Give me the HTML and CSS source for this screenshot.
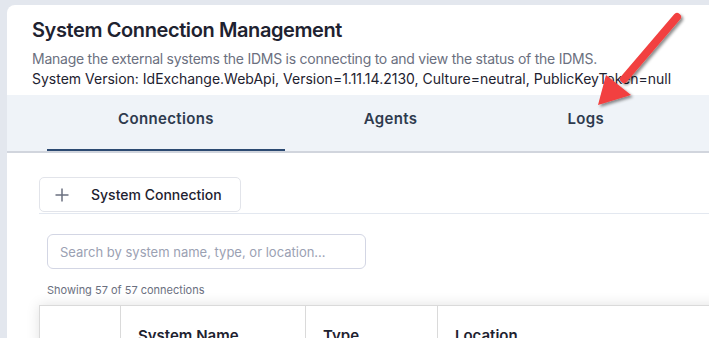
FILE: index.html
```html
<!DOCTYPE html>
<html lang="en">
<head>
    <meta charset="UTF-8">
    <meta name="viewport" content="width=device-width, initial-scale=1.0">
    <title>System Connection Management</title>
    <link rel="stylesheet" href="styles.css">
</head>
<body>
    <div class="card">
        <div class="header">
            <h1>System Connection Management</h1>
            <p class="subtitle">Manage the external systems the IDMS is connecting to and view the status of the IDMS.</p>
            <p class="version">System Version: IdExchange.WebApi, Version=1.11.14.2130, Culture=neutral, PublicKeyToken=null</p>
        </div>

        <!-- Tabs -->
        <div class="tabs">
            <div class="tab active">Connections</div>
            <div class="tab">Agents</div>
            <div class="tab">Logs</div>
        </div>

        <div class="content">
            <div class="toolbar">
                <button class="add-btn" type="button">
                    <svg class="plus" width="14" height="14" viewBox="0 0 14 14">
                        <path d="M7 0.5V13.5M0.5 7H13.5" stroke="#6b7080" stroke-width="1.5" fill="none"/>
                    </svg>
                    <span>System Connection</span>
                </button>
            </div>

            <input class="search" type="text" placeholder="Search by system name, type, or location...">
            <div class="count">Showing 57 of 57 connections</div>

            <table class="grid">
                <thead>
                    <tr>
                        <th class="col-sel"></th>
                        <th class="col-name">System Name</th>
                        <th class="col-type">Type</th>
                        <th class="col-loc">Location</th>
                    </tr>
                </thead>
            </table>
        </div>
    </div>

    <!-- annotation arrow -->
    <svg class="arrow" width="120" height="120" viewBox="0 0 120 120">
        <defs>
            <filter id="shadow" x="-20%" y="-20%" width="150%" height="150%">
                <feDropShadow dx="2" dy="2" stdDeviation="1.5" flood-color="#000" flood-opacity="0.45"/>
            </filter>
        </defs>
        <g filter="url(#shadow)">
            <line x1="97" y1="12" x2="44" y2="74" stroke="#f2403f" stroke-width="8" stroke-linecap="round"/>
            <polygon points="18,100 26,70 51,90" fill="#f2403f"/>
        </g>
    </svg>
</body>
</html>
```

FILE: styles.css
```css
body {
    margin: 0;
    background-color: #e3e7ee;
    font-family: Inter, "Noto Sans", sans-serif;
    color: #1e2230;
    overflow: hidden;
    height: 338px;
}

.card {
    margin: 5px 0 0 7px;
    background: #fff;
    border-radius: 8px 0 0 0;
    height: 400px;
}

.header {
    padding: 12px 25px 0 25px;
}

h1 {
    margin: 0 0 6px 0;
    font-size: 20px;
    font-weight: 600;
    line-height: 26px;
    letter-spacing: -0.4px;
    color: #1e2230;
}

.subtitle,
.version {
    margin: 0;
    font-size: 14px;
    line-height: 20px;
}

.subtitle {
    color: #6b7080;
    letter-spacing: -0.25px;
}

.version {
    color: #1e2230;
}

.tabs {
    display: flex;
    gap: 8px;
    margin-top: 6px;
    padding-left: 40px;
    height: 56px;
    background: #eff3f8;
    border-bottom: 2px solid #d1d5dd;
}

.tab {
    display: flex;
    align-items: center;
    padding: 0 71px 8px 71px;
    font-size: 15px;
    font-weight: 600;
    letter-spacing: 0.35px;
    color: #2e3a4e;
    border-bottom: 2px solid transparent;
}

.tab.active {
    border-bottom-color: #2c4a72;
}

.content {
    padding: 24px 0 0 32px;
}

.toolbar {
    display: flex;
    border-bottom: 1px solid #e3e8f0;
    padding-bottom: 1px;
}

.add-btn {
    display: flex;
    align-items: center;
    width: 202px;
    height: 35px;
    padding: 0 0 0 15px;
    background: #fff;
    border: 1px solid #e2e4ea;
    border-radius: 5px;
    font-family: inherit;
    font-size: 14px;
    font-weight: 500;
    color: #1e2230;
}

.plus {
    margin-right: 22px;
}

.search {
    display: block;
    margin: 20px 0 0 8px;
    width: 319px;
    height: 35px;
    box-sizing: border-box;
    padding: 0 12px;
    border: 1px solid #d3d6e4;
    border-radius: 6px;
    font-family: inherit;
    font-size: 13px;
    color: #1e2230;
}

.search::placeholder {
    color: #9ba1b3;
}

.count {
    margin: 14px 0 0 8px;
    font-size: 11px;
    line-height: 14px;
    color: #6b7080;
}

.grid {
    margin-top: 8px;
    border-collapse: collapse;
    width: 700px;
    background: #fff;
    box-shadow: 0 0 14px rgba(0, 0, 0, 0.12);
}

.grid th {
    text-align: left;
    font-size: 15px;
    font-weight: 600;
    color: #1e2230;
    padding: 20px 17px 4px 17px;
    border-top: 1px solid #dadada;
    border-left: 1px solid #dadada;
    vertical-align: top;
}

.col-sel { width: 81px; box-sizing: border-box; }
.col-name { width: 185px; box-sizing: border-box; }
.col-type { width: 132px; box-sizing: border-box; }

.arrow {
    position: absolute;
    left: 580px;
    top: 5px;
}
```
